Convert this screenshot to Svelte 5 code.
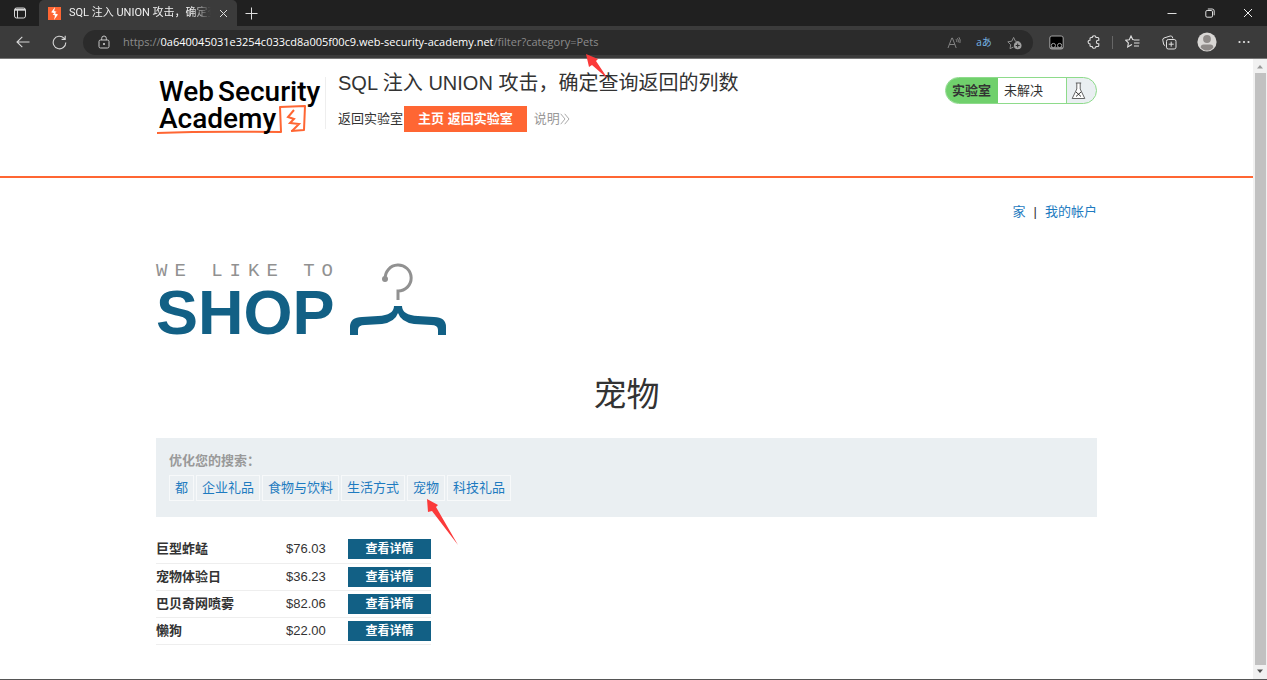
<script>
  const title = 'SQL 注入 UNION 攻击，确定查询返回的列数';
  const categories = ['都', '企业礼品', '食物与饮料', '生活方式', '宠物', '科技礼品'];
  const products = [
    { name: '巨型蚱蜢', price: '$76.03' },
    { name: '宠物体验日', price: '$36.23' },
    { name: '巴贝奇网喷雾', price: '$82.06' },
    { name: '懒狗', price: '$22.00' }
  ];
</script>

{#snippet pointer(kind)}
  {#if kind === 'short'}
    <svg class="pointer short" width="22" height="25" viewBox="0 0 22 25" aria-hidden="true">
      <path d="M0 0 L12 5 L10 7 L22 25 L6 11 L3 13 Z" fill="#fb3a3a" />
    </svg>
  {:else}
    <svg class="pointer long" width="32" height="47" viewBox="0 0 32 47" aria-hidden="true">
      <path d="M0 0 L11 6 L9 8 L31 46 L5 12 L1 13 Z" fill="#fb3a3a" />
    </svg>
  {/if}
{/snippet}

<div class="window">
  <div class="tabs">
    <button class="icon tab-menu" aria-label="标签页操作">
      <svg width="14" height="14" viewBox="0 0 14 14" fill="none" stroke="#d8d8d8"><rect x="1.5" y="2" width="11" height="10" rx="2" /><path d="M2 3.7h10" stroke-width="2" /><path d="M4.5 4v8" /></svg>
    </button>
    <div class="tab">
      <svg width="13" height="13" viewBox="0 0 13 13"><rect width="13" height="13" fill="#ff6633" /><path d="M7 0 3.2 5.2 6.3 6.2 4.6 7.6 7 8.6 6 13 10 7.4 6.8 6.2 8.6 4.8 6.2 4Z" fill="#fff" /></svg>
      <span class="tab-title">{title}</span>
      <button class="icon" aria-label="关闭标签页"><svg width="9" height="9" viewBox="0 0 9 9" stroke="#dedede"><path d="M1 1l7 7M8 1l-7 7" /></svg></button>
    </div>
    <button class="icon new-tab" aria-label="新建标签页"><svg width="13" height="13" viewBox="0 0 13 13" stroke="#dedede"><path d="M6.5 .5v12M.5 6.5h12" /></svg></button>
    <div class="controls">
      <button class="icon" aria-label="最小化"><svg width="10" height="10" viewBox="0 0 10 10" stroke="#dedede"><path d="M.5 5.5h9" /></svg></button>
      <button class="icon" aria-label="还原"><svg width="10" height="10" viewBox="0 0 10 10" fill="none" stroke="#dedede"><rect x=".8" y="2.5" width="6.7" height="6.7" rx="1.3" /><path d="M2.8 1h4.4q2 0 2 2v4.3" /></svg></button>
      <button class="icon" aria-label="关闭"><svg width="10" height="10" viewBox="0 0 10 10" stroke="#eee"><path d="M1 1l8 8M9 1l-8 8" /></svg></button>
    </div>
  </div>

  <div class="toolbar">
    <button class="icon" aria-label="返回"><svg width="14" height="12" viewBox="0 0 14 12" fill="none" stroke="#d8d8d8" stroke-width="1.1"><path d="M13.5 6H1M6.3.8 1 6l5.3 5.2" /></svg></button>
    <button class="icon" aria-label="刷新"><svg width="15" height="15" viewBox="0 0 15 15" fill="none" stroke="#d8d8d8" stroke-width="1.1"><path d="M13.8 7.5A6.3 6.3 0 1 1 12 3.1L13 4.2M13.2.8v3.6H9.6" /></svg></button>
    <div class="address">
      <svg width="12" height="14" viewBox="0 0 12 14" fill="none" stroke="#c8c8c8"><rect x="1" y="5" width="10" height="8" rx="1.5" /><path d="M3.7 5V3.3a2.3 2.3 0 0 1 4.6 0V5" /><circle cx="6" cy="9" r=".7" fill="#c8c8c8" /></svg>
      <div class="url">https://<b>0a640045031e3254c033cd8a005f00c9.web-security-academy.net</b>/filter?category=Pets{@render pointer('short')}</div>
      <div class="tools">
        <button class="icon" aria-label="大声朗读"><svg width="14" height="13" viewBox="0 0 14 13" fill="none" stroke="#8c8c8c"><path d="M1 12 4.8 2h.6L9.2 12M2.5 8.5h5.2M9 3.2q1 1.2.6 2.6M10.4 2.2q1.5 1.9.8 4.2M11.9 1.2q2 2.6 1 5.8" stroke-width=".9" /></svg></button>
        <button class="icon translate" aria-label="翻译">aあ</button>
        <button class="icon" aria-label="收藏"><svg width="15" height="15" viewBox="0 0 15 15" fill="none" stroke="#8c8c8c"><path d="M6.5 12 3 13.7l.7-4L.8 6.8l4-.6L6.6 2.4l1.8 3.8 4 .6" /><circle cx="10.7" cy="10.5" r="3.8" fill="#a0a0a0" stroke="none" /><path d="M10.7 8.5v4M8.7 10.5h4" stroke="#2b2b2b" /></svg></button>
      </div>
    </div>
    <div class="extensions">
      <button class="icon" aria-label="扩展"><svg width="15" height="15" viewBox="0 0 15 15" fill="none" stroke="#a4a4a4"><rect x=".8" y="1" width="13.4" height="13" rx="2" fill="#000" /><path d="M1.3 13h12.4" stroke-width="1.6" /><circle cx="4.4" cy="10.5" r="2.1" fill="#000" /><circle cx="10.6" cy="10.5" r="2.1" fill="#000" /></svg></button>
      <button class="icon" aria-label="扩展管理"><svg width="14" height="14" viewBox="0 0 14 14" fill="none" stroke="#e0e0e0" stroke-width="1.1"><path d="M4 2.5H5.2a1.9 1.8 0 0 1 3.8 0h1.8q1 0 1 1v1.7h-.6a1.8 1.8 0 0 0 0 3.6h.6v1.7q0 1-1 1H9a1.9 1.8 0 0 1-3.8 0H4q-1 0-1-1V9a1.9 1.9 0 0 1 0-3.8V3.5q0-1 1-1Z" /></svg></button>
      <i class="separator"></i>
      <button class="icon" aria-label="收藏夹"><svg width="15" height="14" viewBox="0 0 15 14" fill="none" stroke="#e0e0e0" stroke-width="1.1"><path d="M9 4.8 7.7 4.6 6 1 4.3 4.7.8 5.2l2.6 2.7-.7 4L6 10l1-.5M9 5h5.5M9 8h5.5M9 11h5" /></svg></button>
      <button class="icon" aria-label="集锦"><svg width="15" height="15" viewBox="0 0 15 15" fill="none" stroke="#e0e0e0"><rect x="4.5" y="4.5" width="9.5" height="9.5" rx="1.8" /><path d="M3.2 10.8Q2 10.3 1.6 9L.8 5.2Q.4 3.6 2 3L8.2 1q1.6-.4 2.2 1l.4 1.4M9.2 6.7v5M6.7 9.2h5" /></svg></button>
      <button class="icon" aria-label="用户"><svg width="20" height="20" viewBox="0 0 20 20"><circle cx="10" cy="10" r="9.6" fill="#d9d7d5" /><circle cx="10" cy="7" r="3.9" fill="#8e8a88" /><path d="M3.7 15.5q0-3 3-3h6.6q3 0 3 3Q14 18.6 10 18.6T3.7 15.5Z" fill="#8e8a88" /></svg></button>
      <button class="icon" aria-label="更多"><svg width="12" height="4" viewBox="0 0 12 4" fill="#e6e6e6"><circle cx="1.5" cy="2" r="1.1" /><circle cx="6" cy="2" r="1.1" /><circle cx="10.5" cy="2" r="1.1" /></svg></button>
    </div>
  </div>

  <div class="viewport">
    <div class="page">
      <header>
        <div class="container head">
          <svg class="brand" width="165" height="60" viewBox="0 0 165 60" role="img" aria-label="Web Security Academy">
            <path d="M1 56 Q50 54 125 55 L124 30 L149 29 L148 53 L135 54" fill="none" stroke="#ff6633" stroke-width="2" stroke-linejoin="round" />
            <path d="M138 33 132 40 138 42 134 46 143 47 136 54" fill="none" stroke="#ff6633" stroke-width="2" />
            <text x="3" y="24">Web</text><text x="62" y="24">Security</text>
            <text x="3" y="51">Academy</text>
          </svg>
          <div class="heading">
            <h2>{title}</h2>
            <div class="head-links">
              <a class="back" href="#lab">返回实验室</a><a class="home" href="#home">主页 返回实验室</a>
              <a class="info" href="#info">说明<svg width="10" height="12" viewBox="0 0 10 12" fill="none" stroke="#aaa"><path d="M.7.8 5 6 .7 11.2M4.7.8 9 6l-4.3 5.2" /></svg></a>
            </div>
          </div>
          <div class="status">
            <strong>实验室</strong><span>未解决</span>
            <div class="flask"><svg width="15" height="18" viewBox="0 0 15 18" fill="#fff" stroke="#555" stroke-width=".9"><path d="M4.8 1h5.4M5.8 1v6L1.2 16.5h12.6L9.2 7V1" /><path d="m5 10 5 4.5M10 10l-5 4.5" stroke="#222" /></svg></div>
          </div>
        </div>
      </header>

      <main class="container">
        <nav class="account"><a href="#shop">家</a><span>|</span><a href="#account">我的帐户</a></nav>
        <div class="shop-logo">
          <div class="wordmark"><span>WE LIKE TO</span><strong>SHOP</strong></div>
          <svg width="98" height="74" viewBox="0 0 98 74" aria-hidden="true">
            <circle cx="36" cy="17" r="3" fill="#919191" />
            <path d="M36.2 17A13 13 0 1 1 49 29V38" fill="none" stroke="#919191" stroke-width="3" />
            <path d="M1 73V65Q1 55 13 55L29 54Q45 53 45 44H53Q53 53 69 54L85 55Q97 55 97 65V73H89V68Q89 63 82 63L65 62Q52 60 49 51Q46 60 33 62L16 63Q9 63 9 68V73Z" fill="#126085" />
          </svg>
        </div>
        <h1>宠物</h1>
        <section class="filters">
          <h3>优化您的搜索：</h3>
          <div class="choices">
            {#each categories as category}
              <a href="#{category}">{category}{#if category === '宠物'}{@render pointer('long')}{/if}</a>
            {/each}
          </div>
        </section>
        <table>
          <tbody>
            {#each products as product}
              <tr>
                <th scope="row">{product.name}</th>
                <td class="price">{product.price}</td>
                <td><a class="details" href="#{product.name}">查看详情</a></td>
              </tr>
            {/each}
          </tbody>
        </table>
      </main>
    </div>
    <div class="scrollbar" aria-hidden="true">
      <svg width="8" height="5" viewBox="0 0 8 5"><path d="M1 4.5 4 1l3 3.5Z" fill="#999" /></svg>
      <div class="thumb"></div>
      <svg width="8" height="5" viewBox="0 0 8 5"><path d="M1 .5 4 4 7 .5Z" fill="#505050" /></svg>
    </div>
  </div>
</div>

<style>
  :global(body) { margin: 0; background: #fff; }
  * { box-sizing: border-box; }
  .window { min-height: 100vh; display: flex; flex-direction: column; font: 13px/20px "Liberation Sans", "Noto Sans CJK SC", sans-serif; color: #333; border-bottom: 1px solid #555; }
  a { color: #1e7bc0; text-decoration: none; }
  svg { display: block; flex: none; }
  .icon { border: 0; background: none; padding: 0; margin: 0; display: flex; align-items: center; justify-content: center; flex: none; }

  .tabs { height: 26px; display: flex; background: #202020; }
  .tab-menu { width: 39px; }
  .tab { width: 198px; display: flex; align-items: center; gap: 8px; padding: 0 9px; background: #3b3b3b; border-radius: 5px 5px 0 0; color: #f0f0f0; font: 11px/16px Roboto, "Noto Sans CJK SC", sans-serif; }
  .tab-title { flex: 1; min-width: 0; overflow: hidden; white-space: nowrap; mask-image: linear-gradient(to right, #000 86%, transparent); }
  .new-tab { width: 28px; }
  .controls { margin-left: auto; display: flex; }
  .controls .icon { width: 38px; }

  .toolbar { height: 33px; display: flex; align-items: center; background: #3b3b3b; border-bottom: 1px solid #777; padding: 0 5px 0 4px; }
  .toolbar > .icon { width: 37px; }
  .address { flex: 1; min-width: 0; height: 25px; margin-left: 5px; border-radius: 13px; background: #2b2b2b; display: flex; align-items: center; padding: 0 11px 0 15px; gap: 13px; }
  .url { position: relative; white-space: nowrap; color: #8c8c8c; font: 11px/16px "Open Sans", sans-serif; }
  .url b { font-weight: 400; color: #fff; }
  .pointer { position: absolute; z-index: 2; }
  .short { right: -10px; top: 20px; }
  .long { left: 19px; top: 23px; }
  .tools { margin-left: auto; display: flex; align-items: center; gap: 14px; }
  .tools .icon { width: 16px; }
  .translate { color: #76b4e6; white-space: nowrap; font: 10px/14px "Open Sans", "Noto Sans CJK JP", sans-serif; }
  .extensions { display: flex; align-items: center; margin-left: 5px; }
  .extensions .icon { width: 37px; }
  .separator { width: 1px; height: 13px; background: #666; margin-right: 1px; }

  .viewport { flex: 1; display: flex; }
  .page { flex: 1; min-width: 0; }
  .container { max-width: 941px; margin: 0 auto; }
  header { border-bottom: 2px solid #ff6633; padding: 18px 0 39px; }
  .head { display: flex; align-items: flex-start; }
  .brand { overflow: visible; }
  .brand text { font: 500 28px Roboto, sans-serif; fill: #000; }
  .heading { margin-left: 4px; border-left: 1px solid #eee; padding-left: 12px; height: 52px; }
  h2 { margin: -8px 0 9px; font-size: 20px; line-height: 28px; font-weight: 400; }
  .head-links { display: flex; align-items: center; }
  .back { color: #333; padding-right: 1px; }
  .home { background: #ff6633; color: #fff; font-weight: 700; line-height: 26px; padding: 0 14px; }
  .info { display: flex; align-items: center; color: #999; margin-left: 7px; }
  .status { margin-left: auto; height: 27px; line-height: 25px; display: flex; border: 1px solid #8edb8b; border-radius: 14px; overflow: hidden; background: #eaeff2; }
  .status strong { background: #70d06c; padding: 0 7px 0 6px; }
  .status span { background: #fff; padding: 0 23px 0 6px; border-right: 1px solid #8edb8b; }
  .flask { width: 29px; display: flex; align-items: center; padding-left: 4px; }

  .account { display: flex; justify-content: flex-end; gap: 8px; padding-top: 24px; }
  .shop-logo { display: flex; align-items: flex-end; gap: 14px; margin-top: 40px; }
  .wordmark { display: flex; flex-direction: column; }
  .wordmark span { font: 19px/18px "Liberation Mono", monospace; letter-spacing: 7px; color: #919191; white-space: nowrap; width: 178px; }
  .wordmark strong { font-size: 63px; line-height: 56px; color: #126085; height: 56px; padding-top: 4px; }
  h1 { margin: 35px 0 19px; text-align: center; font-size: 33px; line-height: 48px; font-weight: 400; }
  .filters { background: #eaeff2; padding: 13px 13px 16px; }
  h3 { margin: 0 0 4px; font-size: 13px; line-height: 20px; color: #999; }
  .choices { display: flex; flex-wrap: wrap; gap: 2px; }
  .choices a { position: relative; border: 1px solid #f7f9fa; padding: 0 5px; line-height: 24px; }
  table { border-collapse: collapse; margin-top: 19px; }
  tr { border-bottom: 1px solid #eee; height: 27px; }
  th, td { padding: 0; text-align: left; }
  th { width: 130px; }
  .price { width: 62px; }
  .details { display: block; background: #126085; color: #fff; font-size: 12px; line-height: 20px; font-weight: 700; text-align: center; width: 83px; }
  .scrollbar { width: 14px; background: #f1f1f1; display: flex; flex-direction: column; align-items: center; padding: 5px 0; gap: 4px; }
  .thumb { flex: 1; width: 11px; background: #c1c1c1; }
</style>
